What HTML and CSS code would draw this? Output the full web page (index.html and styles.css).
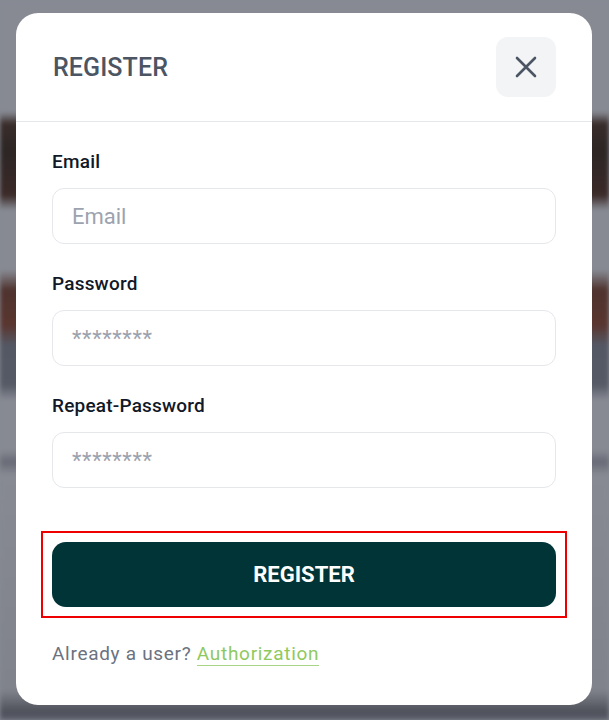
FILE: index.html
```html
<!DOCTYPE html>
<html lang="en">
<head>
  <meta charset="UTF-8" />
  <meta name="viewport" content="width=device-width, initial-scale=1.0"/>
  <title>Register</title>
  <link rel="stylesheet" href="styles.css">
</head>
<body>

<div class="backdrop"></div>

<div class="overlay">
  <div class="modal">
    <div class="modal-head">
      <h2 class="modal-title">REGISTER</h2>
      <button class="close-btn" aria-label="Close">
        <svg width="22" height="22" viewBox="0 0 22 22">
          <path d="M2 2L20 20M20 2L2 20" stroke="#4b5563" stroke-width="2.6" stroke-linecap="round"/>
        </svg>
      </button>
    </div>

    <form class="modal-body" onsubmit="return false">
      <div class="field">
        <label for="email">Email</label>
        <input type="text" id="email" placeholder="Email" />
      </div>
      <div class="field">
        <label for="pass">Password</label>
        <input type="password" id="pass" placeholder="********" autofocus />
      </div>
      <div class="field">
        <label for="pass2">Repeat-Password</label>
        <input type="password" id="pass2" placeholder="********" />
      </div>

      <div class="highlight">
        <button class="submit-btn" type="submit">REGISTER</button>
      </div>

      <p class="switch">Already a user? <a href="#">Authorization</a></p>
    </form>
  </div>
</div>

</body>
</html>
```

FILE: styles.css
```css
* {
  margin: 0; padding: 0; box-sizing: border-box;
  font-family: 'Roboto', 'Liberation Sans', sans-serif;
}

body {
  background: #878a93;
  min-height: 100vh;
  overflow: hidden;
}

/* blurred page behind the modal */
.backdrop {
  position: fixed;
  inset: 0;
  background: linear-gradient(180deg,
    #878a93 0px, #878a93 112px,
    #3a2d2b 124px, #2c2625 150px, #3b2a28 195px,
    #878a93 210px, #878a93 270px,
    #4f332e 290px, #5a3630 325px, #545864 345px, #555a66 385px,
    #878a93 400px, #878a93 450px,
    #686b75 462px, #878a93 475px, #80838c 690px,
    #4e515a 712px, #5d606a 720px);
  filter: blur(2px);
}

.overlay {
  position: fixed;
  inset: 0;
  display: flex;
  align-items: flex-start;
  padding: 13px 0 0 16px;
}

.modal {
  width: 576px;
  background: #fff;
  border-radius: 22px;
}

.modal-head {
  display: flex;
  align-items: center;
  justify-content: space-between;
  padding: 24px 36px 24px 37px;
  border-bottom: 1px solid #e5e7eb;
}

.modal-title {
  font-size: 25px;
  font-weight: 500;
  color: #4b5563;
  letter-spacing: 0.1px;
}

.close-btn {
  width: 60px;
  height: 60px;
  border: none;
  border-radius: 12px;
  background: #f3f4f6;
  display: flex;
  align-items: center;
  justify-content: center;
  cursor: pointer;
}

.modal-body {
  display: flex;
  flex-direction: column;
  padding: 28px 36px 39px;
}

.field {
  display: flex;
  flex-direction: column;
  gap: 14px;
  margin-bottom: 28px;
}

.field label {
  font-size: 19px;
  line-height: 24px;
  font-weight: 500;
  color: #111827;
  letter-spacing: 0.2px;
}

.field input {
  height: 56px;
  padding: 0 19px;
  border: 1px solid #e5e7eb;
  border-radius: 12px;
  font-size: 22px;
  color: #111827;
  caret-color: #111827;
  outline: none;
}

.field input[type="password"]::placeholder {
  letter-spacing: 0.6px;
}

.field input::placeholder {
  color: #9ca3af;
}

.highlight {
  margin: 15px -11px 0;
  padding: 9px;
  border: 2px solid #ee0000;
}

.submit-btn {
  width: 100%;
  height: 65px;
  border: none;
  border-radius: 14px;
  background: #003437;
  color: #fff;
  font-size: 22px;
  font-weight: 700;
  cursor: pointer;
}

.switch {
  margin-top: 24px;
  font-size: 19px;
  line-height: 24px;
  color: #6b7280;
  letter-spacing: 0.7px;
}

.switch a {
  color: #8fc95e;
  text-decoration: none;
  border-bottom: 1px solid #a8d585;
}
```
